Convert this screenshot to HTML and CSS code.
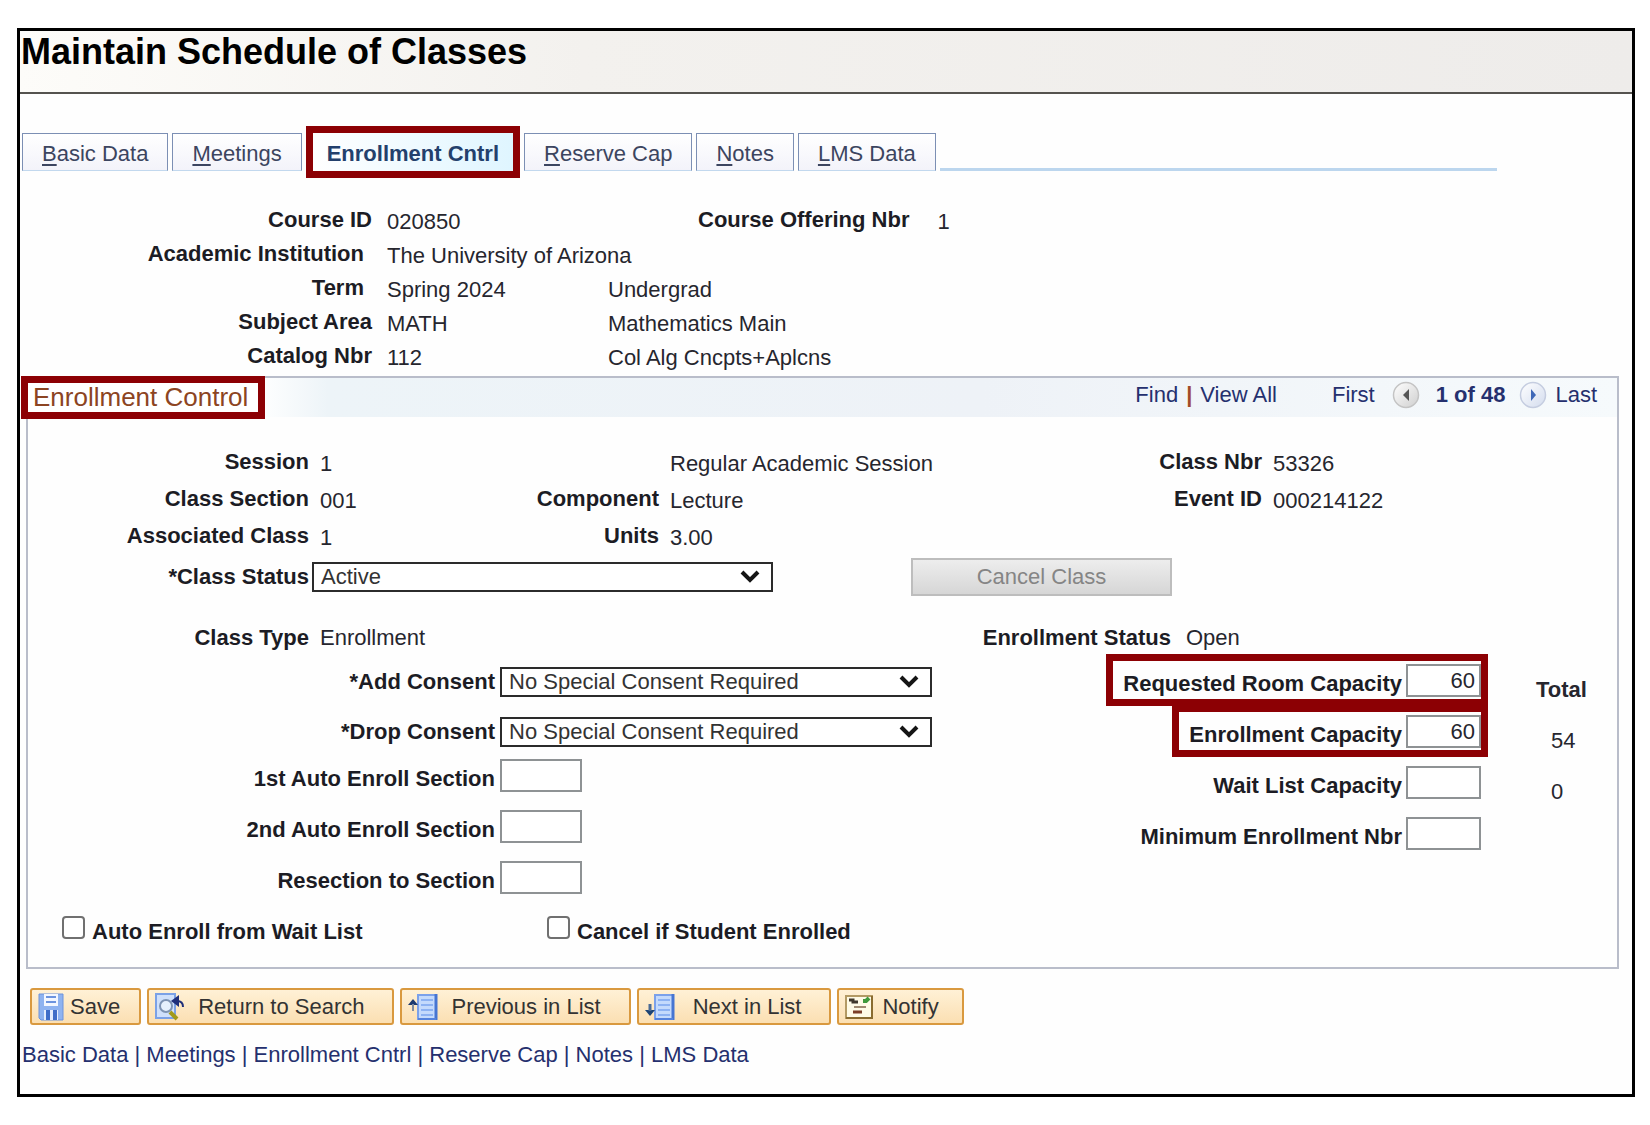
FILE: index.html
```html
<!DOCTYPE html>
<html lang="en">
<head>
<meta charset="utf-8">
<title>Maintain Schedule of Classes</title>
<link rel="stylesheet" href="styles.css">
</head>
<body>
<main class="frame">
  <header class="page-head"><h1>Maintain Schedule of Classes</h1></header>

  <nav class="tabs" aria-label="Pages">
    <a class="tab" href="#"><span class="key">B</span>asic Data</a>
    <a class="tab" href="#"><span class="key">M</span>eetings</a>
    <a class="tab tab-active" href="#" aria-current="page">Enrollment Cntrl</a>
    <a class="tab" href="#"><span class="key">R</span>eserve Cap</a>
    <a class="tab" href="#"><span class="key">N</span>otes</a>
    <a class="tab" href="#"><span class="key">L</span>MS Data</a>
    <span class="tab-line"></span>
  </nav>

  <section class="course">
    <span class="label">Course ID</span><span class="value">020850</span>
    <div class="offering"><span class="label">Course Offering Nbr</span><span class="value">1</span></div>
    <span class="label inset">Academic Institution</span><span class="value wide">The University of Arizona</span>
    <span class="label inset">Term</span><span class="value">Spring 2024</span><span class="value">Undergrad</span>
    <span class="label">Subject Area</span><span class="value">MATH</span><span class="value">Mathematics Main</span>
    <span class="label">Catalog Nbr</span><span class="value">112</span><span class="value">Col Alg Cncpts+Aplcns</span>
  </section>

  <form class="panel">
    <div class="panel-head">
      <h2>Enrollment Control</h2>
      <div class="pager">
        <a href="#">Find</a><span class="bar">|</span><a href="#">View All</a>
        <span class="first">First</span>
        <button type="button" class="step" aria-label="Previous row">
          <svg width="28" height="28" viewBox="0 0 28 28"><defs><linearGradient id="g1" x1="0" y1="0" x2="1" y2="1"><stop offset="0" stop-color="#fff"/><stop offset="1" stop-color="#cfcfcf"/></linearGradient></defs><circle cx="14" cy="14" r="12.5" fill="url(#g1)" stroke="#c4c4c4" stroke-width="1.5"/><path d="M17 8v12l-6-6z" fill="#555"/></svg>
        </button>
        <strong>1 of 48</strong>
        <button type="button" class="step" aria-label="Next row">
          <svg width="28" height="28" viewBox="0 0 28 28"><defs><linearGradient id="g2" x1="0" y1="0" x2="1" y2="1"><stop offset="0" stop-color="#fff"/><stop offset="1" stop-color="#d3dcee"/></linearGradient></defs><circle cx="14" cy="14" r="12.5" fill="url(#g2)" stroke="#c5cde0" stroke-width="1.5"/><path d="M12 8v12l5-6z" fill="#3f68b8"/></svg>
        </button>
        <a href="#">Last</a>
      </div>
    </div>

    <div class="facts">
      <span class="label">Session</span><span class="value">1</span>
      <span></span><span class="value">Regular Academic Session</span>
      <span class="label">Class Nbr</span><span class="value">53326</span>
      <span class="label">Class Section</span><span class="value">001</span>
      <span class="label">Component</span><span class="value">Lecture</span>
      <span class="label">Event ID</span><span class="value">000214122</span>
      <span class="label">Associated Class</span><span class="value">1</span>
      <span class="label">Units</span><span class="value">3.00</span>
    </div>

    <div class="status-row">
      <label for="status">*Class Status</label>
      <select id="status" class="select select-status"><option>Active</option></select>
      <button type="button" class="cancel" disabled>Cancel Class</button>
    </div>

    <div class="type-row">
      <span class="label">Class Type</span><span>Enrollment</span>
      <span class="label">Enrollment Status</span><span class="open">Open</span>
    </div>

    <div class="columns">
      <div class="sections">
        <div class="field"><label for="add">*Add Consent</label><select id="add" class="select"><option>No Special Consent Required</option></select></div>
        <div class="field"><label for="drop">*Drop Consent</label><select id="drop" class="select"><option>No Special Consent Required</option></select></div>
        <div class="boxes">
          <div class="field"><label for="auto1">1st Auto Enroll Section</label><input id="auto1" type="text"></div>
          <div class="field"><label for="auto2">2nd Auto Enroll Section</label><input id="auto2" type="text"></div>
          <div class="field"><label for="resect">Resection to Section</label><input id="resect" type="text"></div>
        </div>
      </div>
      <div class="capacity boxes">
        <div class="field marked"><label for="room">Requested Room Capacity</label><input id="room" type="text" value="60"></div>
        <div class="field marked"><label for="enrl">Enrollment Capacity</label><input id="enrl" type="text" value="60"></div>
        <div class="field"><label for="wait">Wait List Capacity</label><input id="wait" type="text"></div>
        <div class="field"><label for="min">Minimum Enrollment Nbr</label><input id="min" type="text"></div>
      </div>
      <div class="totals"><strong>Total</strong><span>54</span><span>0</span></div>
    </div>

    <div class="checks">
      <div class="check"><input id="autowait" type="checkbox"><label for="autowait">Auto Enroll from Wait List</label></div>
      <div class="check"><input id="cancelif" type="checkbox"><label for="cancelif">Cancel if Student Enrolled</label></div>
    </div>
  </form>

  <div class="toolbar">
    <button type="button" class="btn">
      <svg width="26" height="28" viewBox="0 0 26 28"><path d="M1 1h24v26H3l-2-2z" fill="#8fb3f0" stroke="#6c93dc"/><path d="M6 1h14v12H6z" fill="#f3f7ff"/><path d="M8 4h10M8 9h10" stroke="#6d94de" stroke-width="2"/><path d="M6 17h14v10H6z" fill="#e4edfd"/><path d="M8 17h4v10H8zM15 17h4v10h-4z" fill="#3f6dc8"/></svg>
      Save</button>
    <button type="button" class="btn btn-wide">
      <svg width="30" height="28" viewBox="0 0 30 28"><path d="M1 1h19v24H1z" fill="#cfe0fb" stroke="#7ba1e6" stroke-width="2"/><circle cx="11" cy="13" r="6" fill="#e6f1fd" stroke="#7d93b3" stroke-width="2"/><path d="M15 19l7 7" stroke="#a39a1a" stroke-width="4"/><path d="M24 2l-8 6 8 6z" fill="#1f2f7a"/><path d="M22 8c4 0 6 2 6 6" fill="none" stroke="#1f2f7a" stroke-width="2"/></svg>
      Return to Search</button>
    <button type="button" class="btn btn-wide">
      <svg width="30" height="28" viewBox="0 0 30 28"><path d="M10 2h18v24H10z" fill="#c4dafc" stroke="#7ba1ea" stroke-width="2"/><path d="M28 1v26" stroke="#4675d2" stroke-width="3"/><path d="M10 26h18" stroke="#5583dd" stroke-width="2"/><path d="M13 7h12M13 12h12M13 17h12M13 22h12" stroke="#8db2f2" stroke-width="2"/><path d="M0 12l5-6 5 6z" fill="#1d3a6e"/><path d="M5 11v7" stroke="#7d8ba0" stroke-width="2"/></svg>
      Previous in List</button>
    <button type="button" class="btn btn-wide btn-next">
      <svg width="30" height="28" viewBox="0 0 30 28"><path d="M10 2h18v24H10z" fill="#c4dafc" stroke="#7ba1ea" stroke-width="2"/><path d="M28 1v26" stroke="#4675d2" stroke-width="3"/><path d="M10 26h18" stroke="#5583dd" stroke-width="2"/><path d="M13 7h12M13 12h12M13 17h12M13 22h12" stroke="#8db2f2" stroke-width="2"/><path d="M0 17l5 6 5-6z" fill="#1d4474"/><path d="M5 11v7" stroke="#4a6a94" stroke-width="3"/></svg>
      Next in List</button>
    <button type="button" class="btn btn-notify">
      <svg width="28" height="24" viewBox="0 0 28 24"><path d="M1 1h26v22H1z" fill="#fffbe6" stroke="#b39a64" stroke-width="2"/><path d="M27 1v22H1" fill="none" stroke="#8a6c30" stroke-width="2"/><path d="M4 5h4v2h5" fill="none" stroke="#40382c" stroke-width="3"/><path d="M18 6h3l3-3" fill="none" stroke="#3f9a3b" stroke-width="4"/><path d="M9 12h12" stroke="#a08a70" stroke-width="2"/><path d="M8 17h9" stroke="#7c3f28" stroke-width="3"/></svg>
      Notify</button>
  </div>

  <footer class="links">
    <a href="#">Basic Data</a> | <a href="#">Meetings</a> | <a href="#">Enrollment Cntrl</a> | <a href="#">Reserve Cap</a> | <a href="#">Notes</a> | <a href="#">LMS Data</a>
  </footer>
</main>
</body>
</html>
```
FILE: styles.css
```css
* { box-sizing: border-box; }

body {
  margin: 0;
  padding: 28px 15px 28px 17px;
  background: #fff;
  color: #26262e;
  font: 22px/30px "Liberation Sans", Arial, sans-serif;
}

button, input, select { font: inherit; color: inherit; margin: 0; }
a { color: #25306e; text-decoration: none; }
label, .label { font-weight: bold; color: #1c1c24; white-space: nowrap; }

.frame { border: 3px solid #000; background: #fefefe; }

/* Title bar */
.page-head {
  height: 63px;
  padding-left: 1px;
  border-bottom: 2px solid #55534f;
  background: linear-gradient(to right, #fdfcf9, #f3f1ee 35%, #eeecea);
}
h1 { margin: 0; font-size: 36px; line-height: 42px; color: #000; }

/* Tabs */
.tabs { display: flex; gap: 4px; padding: 39px 0 0 2px; }
.tab {
  height: 38px;
  padding: 0 19px;
  border: 1px solid #7c8fb4;
  border-bottom-color: #c2d8ee;
  background: linear-gradient(#fff, #f3f3fa);
  color: #3c4560;
  line-height: 39px;
  white-space: nowrap;
}
.key { text-decoration: underline; text-decoration-thickness: 2px; text-underline-offset: 3px; }
.tab-active {
  margin: 0 7px;
  padding: 0 14px;
  border: 0;
  outline: 7px solid #8c0004;
  background: linear-gradient(to right, #fff, #dff5ff);
  color: #23406c;
  font-weight: bold;
  line-height: 41px;
}
.tab-line { flex: 1; align-self: flex-end; height: 3px; margin-right: 135px; background: #bcd6ee; }

/* Course summary */
.course {
  display: grid;
  grid-template-columns: 352px 221px 1fr;
  grid-auto-rows: 34px;
  margin: 32px 0 3px;
}
.course > .label { text-align: right; }
.course .label { line-height: 34px; }
.course .value { line-height: 38px; }
.course > .value { padding-left: 15px; }
.course .wide { grid-column: span 2; }
.course .inset { padding-right: 8px; }
.offering { display: flex; gap: 28px; padding-left: 105px; }

/* Panel */
.panel {
  margin: 0 13px 0 6px;
  padding-bottom: 19px;
  border: 2px solid #b9bdca;
}
.panel-head {
  display: flex;
  justify-content: space-between;
  height: 39px;
  background: linear-gradient(to right, #fff 230px, #edf4f8 300px, #eef2f7 60%, #f6fafc);
}
h2 {
  height: 43px;
  margin: -2px 0 0 -7px;
  padding: 0 10px 0 5px;
  border: 7px solid #8c0004;
  background: #fff;
  color: #8c4422;
  font-size: 26px;
  font-weight: normal;
  line-height: 29px;
}
.pager { display: flex; align-items: center; height: 34px; padding-right: 20px; color: #25306e; }
.bar { margin: 0 8px; color: #a04a2a; font-weight: bold; }
.first { margin-left: 55px; }
.step { display: flex; margin-left: 17px; padding: 0; border: 0; background: none; }
.pager strong { margin-left: 16px; }
strong + .step { margin: 0 8px 0 14px; }

.facts {
  display: grid;
  grid-template-columns: 281px 140px 188px 340px 241px 1fr;
  grid-auto-rows: 37px;
  column-gap: 11px;
  margin-top: 27px;
}
.facts .label { text-align: right; line-height: 36px; }
.facts .value { line-height: 40px; }

.status-row { display: flex; align-items: center; height: 38px; margin-top: 3px; }
.status-row label { width: 281px; text-align: right; line-height: 34px; }
.select {
  appearance: none;
  width: 432px;
  height: 30px;
  padding: 0 36px 0 7px;
  border: 2px solid #2b2b2b;
  border-radius: 0;
  background: #fff url("data:image/svg+xml,%3Csvg xmlns='http://www.w3.org/2000/svg' width='20' height='14' viewBox='0 0 20 14'%3E%3Cpath d='M2 2l8 8 8-8' fill='none' stroke='%23151515' stroke-width='4'/%3E%3C/svg%3E") no-repeat right 11px center;
  color: #333;
  line-height: 26px;
}
.select-status { width: 461px; margin-left: 3px; }
.cancel {
  width: 261px;
  height: 38px;
  margin-left: 138px;
  padding: 0;
  border: 2px solid #bdbdbd;
  background: linear-gradient(#ededed, #d6d6d6);
  color: #858585;
}

.type-row {
  display: grid;
  grid-template-columns: 281px 559px 281px 1fr;
  column-gap: 11px;
  margin-top: 27px;
}
.type-row .label { text-align: right; }
.open { padding-left: 4px; }

/* Entry fields */
.columns { display: grid; grid-template-columns: 904px 549px 1fr; margin-top: 11px; }
.sections { display: flex; flex-direction: column; gap: 20px; padding-top: 3px; }
.sections .boxes { margin-top: -8px; }
.sections label { width: 467px; text-align: right; }
.field { display: flex; gap: 5px; }
.boxes { display: flex; flex-direction: column; gap: 18px; }
.boxes label { line-height: 39px; }
.boxes .field { height: 33px; }
.field input {
  width: 82px;
  height: 33px;
  padding: 0 4px;
  border: 2px solid #8e9294;
  background: #fff;
  text-align: right;
}
.capacity { align-items: flex-end; }
.capacity .field { gap: 4px; }
.capacity input { width: 75px; }
.marked { position: relative; }
.marked::after {
  content: "";
  position: absolute;
  inset: -10px -7px -9px -17px;
  border: 7px solid #8c0004;
  pointer-events: none;
}
.totals { display: flex; flex-direction: column; padding-left: 55px; line-height: 51px; }
.totals span { padding-left: 15px; }

.checks { display: flex; padding-left: 34px; margin-top: 22px; }
.check { display: flex; gap: 7px; width: 485px; }
.check input {
  appearance: none;
  width: 23px;
  height: 23px;
  border: 2px solid #707070;
  border-radius: 4px;
  background: #fff;
}
.check label { line-height: 32px; }

/* Toolbar */
.toolbar { display: flex; gap: 6px; padding: 19px 0 0 10px; }
.btn {
  display: flex;
  align-items: center;
  gap: 6px;
  height: 37px;
  padding: 0 19px 0 6px;
  border: 2px solid #d9993f;
  border-radius: 3px;
  background: linear-gradient(#fff1d6, #fbdfb2);
  color: #333;
  white-space: nowrap;
}
.btn-wide { gap: 13px; padding-right: 28px; }
.btn-next { gap: 18px; }
.btn-notify { gap: 9px; padding-right: 23px; }

.links { padding: 15px 0 24px 2px; color: #25306e; }
```
